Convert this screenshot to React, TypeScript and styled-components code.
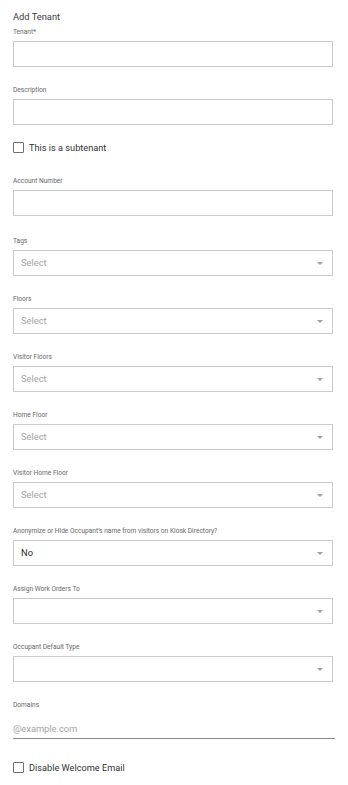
import * as React from 'react';
import styled, { createGlobalStyle } from 'styled-components';

const GlobalStyle = createGlobalStyle`
  html, body {
    margin: 0;
    padding: 0;
    background: #ffffff;
  }
  body {
    font-family: Roboto, "Liberation Sans", Arial, sans-serif;
    -webkit-font-smoothing: antialiased;
  }
  * {
    box-sizing: border-box;
  }
`;

const Page = styled.div`
  width: 348px;
  padding: 10px 15px 10px 13px;
  display: flex;
  flex-direction: column;
`;

const Title = styled.h1`
  margin: 0 0 3px;
  font-size: 9.3px;
  line-height: 14px;
  font-weight: 400;
  color: #3a3a3a;
`;

const Field = styled.div<{ $gap?: number }>`
  display: flex;
  flex-direction: column;
  margin-bottom: ${(p) => (p.$gap !== undefined ? p.$gap : 18)}px;
`;

const Label = styled.label`
  display: block;
  height: 10px;
  margin-bottom: 4px;
  font-size: 6.6px;
  line-height: 10px;
  color: #666666;
  white-space: nowrap;
`;

const TextBox = styled.input`
  width: 320px;
  height: 26px;
  margin: 0;
  padding: 0 7px;
  border: 1px solid #cacaca;
  border-radius: 0;
  background: #ffffff;
  font-family: inherit;
  font-size: 9.3px;
  color: #222222;
  outline: none;
`;

const SelectBox = styled.div`
  width: 320px;
  height: 26px;
  padding: 0 9px 0 7px;
  border: 1px solid #cacaca;
  background: #ffffff;
  display: flex;
  align-items: center;
  justify-content: space-between;
`;

const SelectValue = styled.span<{ $placeholder?: boolean }>`
  font-size: 9.3px;
  line-height: 12px;
  color: ${(p) => (p.$placeholder ? '#a3a3a3' : '#2a2a2a')};
`;

const Caret = styled.span`
  width: 0;
  height: 0;
  border-left: 3px solid transparent;
  border-right: 3px solid transparent;
  border-top: 3px solid #a0a0a0;
  margin-top: 1px;
`;

const UnderlineInput = styled.input`
  width: 322px;
  height: 25px;
  margin: 0;
  padding: 5px 0 0;
  border: none;
  border-bottom: 1px solid #8c8c8c;
  background: transparent;
  font-family: inherit;
  font-size: 9.3px;
  color: #222222;
  outline: none;
  &::placeholder {
    color: #a3a3a3;
  }
`;

const CheckRow = styled.label<{ $top: number; $bottom: number }>`
  display: flex;
  align-items: center;
  gap: 5px;
  height: 12px;
  margin-top: ${(p) => p.$top}px;
  margin-bottom: ${(p) => p.$bottom}px;
  font-size: 9.2px;
  color: #333333;
`;

const Box = styled.span`
  width: 11px;
  height: 11px;
  border: 1px solid #707070;
  border-radius: 1px;
  background: #ffffff;
  flex-shrink: 0;
`;

interface SelectFieldProps {
  label: string;
  value?: string;
  placeholder?: string;
}

const SelectField = ({ label, value, placeholder }: SelectFieldProps) => (
  <Field>
    <Label>{label}</Label>
    <SelectBox>
      <SelectValue $placeholder={!value}>{value || placeholder || ''}</SelectValue>
      <Caret />
    </SelectBox>
  </Field>
);

const App = () => (
  <Page>
    <GlobalStyle />
    <Title>Add Tenant</Title>
    <Field>
      <Label>Tenant*</Label>
      <TextBox />
    </Field>
    <Field $gap={0}>
      <Label>Description</Label>
      <TextBox />
    </Field>
    <CheckRow $top={16} $bottom={23}>
      <Box />
      This is a subtenant
    </CheckRow>
    <Field $gap={20}>
      <Label>Account Number</Label>
      <TextBox />
    </Field>
    <SelectField label="Tags" placeholder="Select" />
    <SelectField label="Floors" placeholder="Select" />
    <SelectField label="Visitor Floors" placeholder="Select" />
    <SelectField label="Home Floor" placeholder="Select" />
    <SelectField label="Visitor Home Floor" placeholder="Select" />
    <SelectField label="Anonymize or Hide Occupant’s name from visitors on Kiosk Directory?" value="No" />
    <SelectField label="Assign Work Orders To" />
    <SelectField label="Occupant Default Type" />
    <Field $gap={0}>
      <Label>Domains</Label>
      <UnderlineInput placeholder="@example.com" />
    </Field>
    <CheckRow $top={22} $bottom={0}>
      <Box />
      Disable Welcome Email
    </CheckRow>
  </Page>
);

export default App;
